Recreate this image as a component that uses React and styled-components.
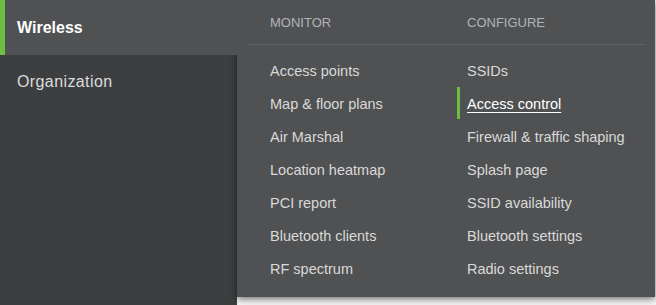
import React from 'react'
import styled, { createGlobalStyle } from 'styled-components'

const GlobalStyle = createGlobalStyle`
  html, body {
    margin: 0;
    padding: 0;
    background: #f5f5f5;
  }
  body {
    font-family: 'Liberation Sans', Arial, sans-serif;
  }
`

const Page = styled.div`
  position: relative;
  display: flex;
  width: 656px;
  height: 305px;
  overflow: hidden;
`

const Sidebar = styled.nav`
  width: 237px;
  flex: none;
  background: #3d3e40;
  display: flex;
  flex-direction: column;
`

const NavItem = styled.div`
  position: relative;
  z-index: 2;
  display: flex;
  align-items: center;
  height: ${p => (p.$active ? '55px' : '53px')};
  padding-left: 17px;
  font-size: 16px;
  font-weight: ${p => (p.$active ? 700 : 400)};
  letter-spacing: ${p => (p.$active ? '0' : '0.4px')};
  color: ${p => (p.$active ? '#ffffff' : '#dcdcdc')};
  background: ${p => (p.$active ? '#505153' : 'transparent')};
  box-shadow: ${p => (p.$active ? 'inset 5px 0 0 #6cbf40' : 'none')};
`

const Main = styled.main`
  flex: 1;
  background: #f5f5f5;
`

const Dropdown = styled.div`
  position: absolute;
  z-index: 1;
  top: 0;
  left: 237px;
  width: 418px;
  padding: 0 11px 12px;
  box-sizing: border-box;
  background: #505153;
  box-shadow: 0 2px 7px rgba(0, 0, 0, 0.55);
`

const Columns = styled.div`
  display: grid;
  grid-template-columns: 197px 1fr;
  padding-left: 22px;
`

const Heading = styled.div`
  height: 44px;
  display: flex;
  align-items: center;
  font-size: 13px;
  color: #afb4b8;
  text-transform: uppercase;
`

const Divider = styled.div`
  height: 1px;
  background: #626366;
`

const Body = styled(Columns)`
  padding-top: 9px;
`

const List = styled.ul`
  list-style: none;
  margin: 0;
  padding: 0;
`

const Item = styled.li`
  position: relative;
  height: 33px;
  display: flex;
  align-items: center;
  font-size: 14.5px;
  color: ${p => (p.$active ? '#ffffff' : '#d9d9d9')};
  text-decoration: ${p => (p.$active ? 'underline' : 'none')};
  text-decoration-thickness: 1px;
  text-underline-offset: 3px;

  &::before {
    content: '';
    display: ${p => (p.$active ? 'block' : 'none')};
    position: absolute;
    left: -10px;
    top: 0;
    width: 3px;
    height: 32px;
    background: #6cbf40;
  }
`

const monitor = [
  'Access points',
  'Map & floor plans',
  'Air Marshal',
  'Location heatmap',
  'PCI report',
  'Bluetooth clients',
  'RF spectrum'
]

const configure = [
  'SSIDs',
  'Access control',
  'Firewall & traffic shaping',
  'Splash page',
  'SSID availability',
  'Bluetooth settings',
  'Radio settings'
]

export default function App() {
  return (
    <>
      <GlobalStyle />
      <Page>
        <Sidebar>
          <NavItem $active>Wireless</NavItem>
          <NavItem>Organization</NavItem>
        </Sidebar>
        <Main />
        <Dropdown>
          <Columns>
            <Heading>Monitor</Heading>
            <Heading>Configure</Heading>
          </Columns>
          <Divider />
          <Body>
            <List>
              {monitor.map(label => (
                <Item key={label}>{label}</Item>
              ))}
            </List>
            <List>
              {configure.map(label => (
                <Item key={label} $active={label === 'Access control'}>
                  {label}
                </Item>
              ))}
            </List>
          </Body>
        </Dropdown>
      </Page>
    </>
  )
}
